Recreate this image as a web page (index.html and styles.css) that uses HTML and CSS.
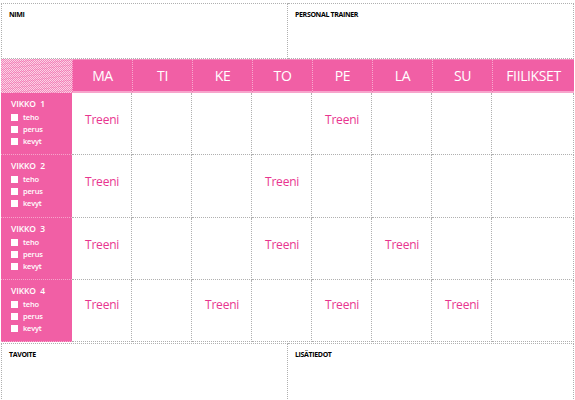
FILE: index.html
```html
<!DOCTYPE html>
<html lang="fi">
<head>
<meta charset="utf-8">
<link rel="stylesheet" href="styles.css">
</head>
<body>
<div class="page">
  <div class="boxes top">
    <div class="box left"><span class="lbl">NIMI</span></div>
    <div class="box"><span class="lbl">PERSONAL TRAINER</span></div>
  </div>
  <div class="grid">
    <div class="corner"></div>
    <div class="day">MA</div>
    <div class="day">TI</div>
    <div class="day">KE</div>
    <div class="day">TO</div>
    <div class="day">PE</div>
    <div class="day">LA</div>
    <div class="day">SU</div>
    <div class="day last">FIILIKSET</div>

    <div class="week"><div class="wk">VIKKO&nbsp; 1</div><div class="opt"><i></i>teho</div><div class="opt"><i></i>perus</div><div class="opt"><i></i>kevyt</div></div>
    <div class="cell"><span class="tr">Treeni</span></div><div class="cell"></div><div class="cell"></div><div class="cell"></div><div class="cell"><span class="tr">Treeni</span></div><div class="cell"></div><div class="cell"></div><div class="cell last"></div>

    <div class="week"><div class="wk">VIKKO&nbsp; 2</div><div class="opt"><i></i>teho</div><div class="opt"><i></i>perus</div><div class="opt"><i></i>kevyt</div></div>
    <div class="cell"><span class="tr">Treeni</span></div><div class="cell"></div><div class="cell"></div><div class="cell"><span class="tr">Treeni</span></div><div class="cell"></div><div class="cell"></div><div class="cell"></div><div class="cell last"></div>

    <div class="week"><div class="wk">VIKKO&nbsp; 3</div><div class="opt"><i></i>teho</div><div class="opt"><i></i>perus</div><div class="opt"><i></i>kevyt</div></div>
    <div class="cell"><span class="tr">Treeni</span></div><div class="cell"></div><div class="cell"></div><div class="cell"><span class="tr">Treeni</span></div><div class="cell"></div><div class="cell"><span class="tr">Treeni</span></div><div class="cell"></div><div class="cell last"></div>

    <div class="week"><div class="wk">VIKKO&nbsp; 4</div><div class="opt"><i></i>teho</div><div class="opt"><i></i>perus</div><div class="opt"><i></i>kevyt</div></div>
    <div class="cell up"><span class="tr">Treeni</span></div><div class="cell"></div><div class="cell up"><span class="tr">Treeni</span></div><div class="cell"></div><div class="cell up"><span class="tr">Treeni</span></div><div class="cell"></div><div class="cell up"><span class="tr">Treeni</span></div><div class="cell last"></div>
  </div>
  <div class="boxes bottom">
    <div class="box left"><span class="lbl">TAVOITE</span></div>
    <div class="box"><span class="lbl">LISÄTIEDOT</span></div>
  </div>
</div>
</body>
</html>
```
FILE: styles.css
```css
html, body { margin: 0; padding: 0; background: #fff; }
body { font-family: "Open Sans", "Liberation Sans", sans-serif; }
.page { width: 574px; padding: 3px 0 0 1px; }

.boxes { display: grid; grid-template-columns: 287px 286px; }
.boxes.top { height: 56px; }
.boxes.bottom { height: 58px; margin-top: 1px; }
.box {
  border: 1px dotted #b0b0b0;
  border-left: none;
  padding: 6px 0 0 7px;
}
.box.left { border-left: 1px dotted #b0b0b0; }
.boxes.bottom .box { border-bottom: none; }
.lbl {
  font-size: 7px;
  font-weight: 700;
  color: #000;
  letter-spacing: -0.35px;
  line-height: 10px;
  display: block;
}

.grid {
  display: grid;
  grid-template-columns: 71px repeat(7, 60px) 82px;
  grid-template-rows: 34px 62px 63px 62px 62px;
}
.corner {
  background:
    repeating-linear-gradient(172deg, rgba(241, 95, 165, 0.25) 0 1px, transparent 1px 5px),
    conic-gradient(#f289bc 25%, #fcd2e5 0 50%, #f289bc 0 75%, #fcd2e5 0) 0 0 / 2px 2px;
}
.day {
  background: #f15fa5;
  border-top: 1px solid #f48bbd;
  border-bottom: 2px solid #f7a5cc;
  border-left: 1px dotted #f9a9cf;
  color: #fff;
  font-size: 14px;
  display: flex;
  align-items: center;
  justify-content: center;
  letter-spacing: -0.4px;
}
.week {
  background: #f15fa5;
  border-bottom: 1px dotted #f7a5cc;
  padding: 6px 0 0 10px;
  color: #fff;
}
.wk { font-size: 8.5px; font-weight: 600; line-height: 10px; margin-bottom: 2px; letter-spacing: -0.1px; }
.opt {
  display: flex;
  align-items: center;
  font-size: 7.5px;
  font-weight: 600;
  line-height: 12px;
  height: 12px;
  letter-spacing: -0.2px;
}
.opt i {
  display: block;
  width: 7px;
  height: 7px;
  background: #fff;
  margin-right: 5px;
}
.cell {
  border-right: 1px dotted #b0b0b0;
  border-bottom: 1px dotted #b0b0b0;
  padding: 14px 0 0 13px;
}
.cell.up { padding-top: 12px; }
.tr {
  color: #e9358f;
  font-size: 12px;
  letter-spacing: -0.2px;
}
```
